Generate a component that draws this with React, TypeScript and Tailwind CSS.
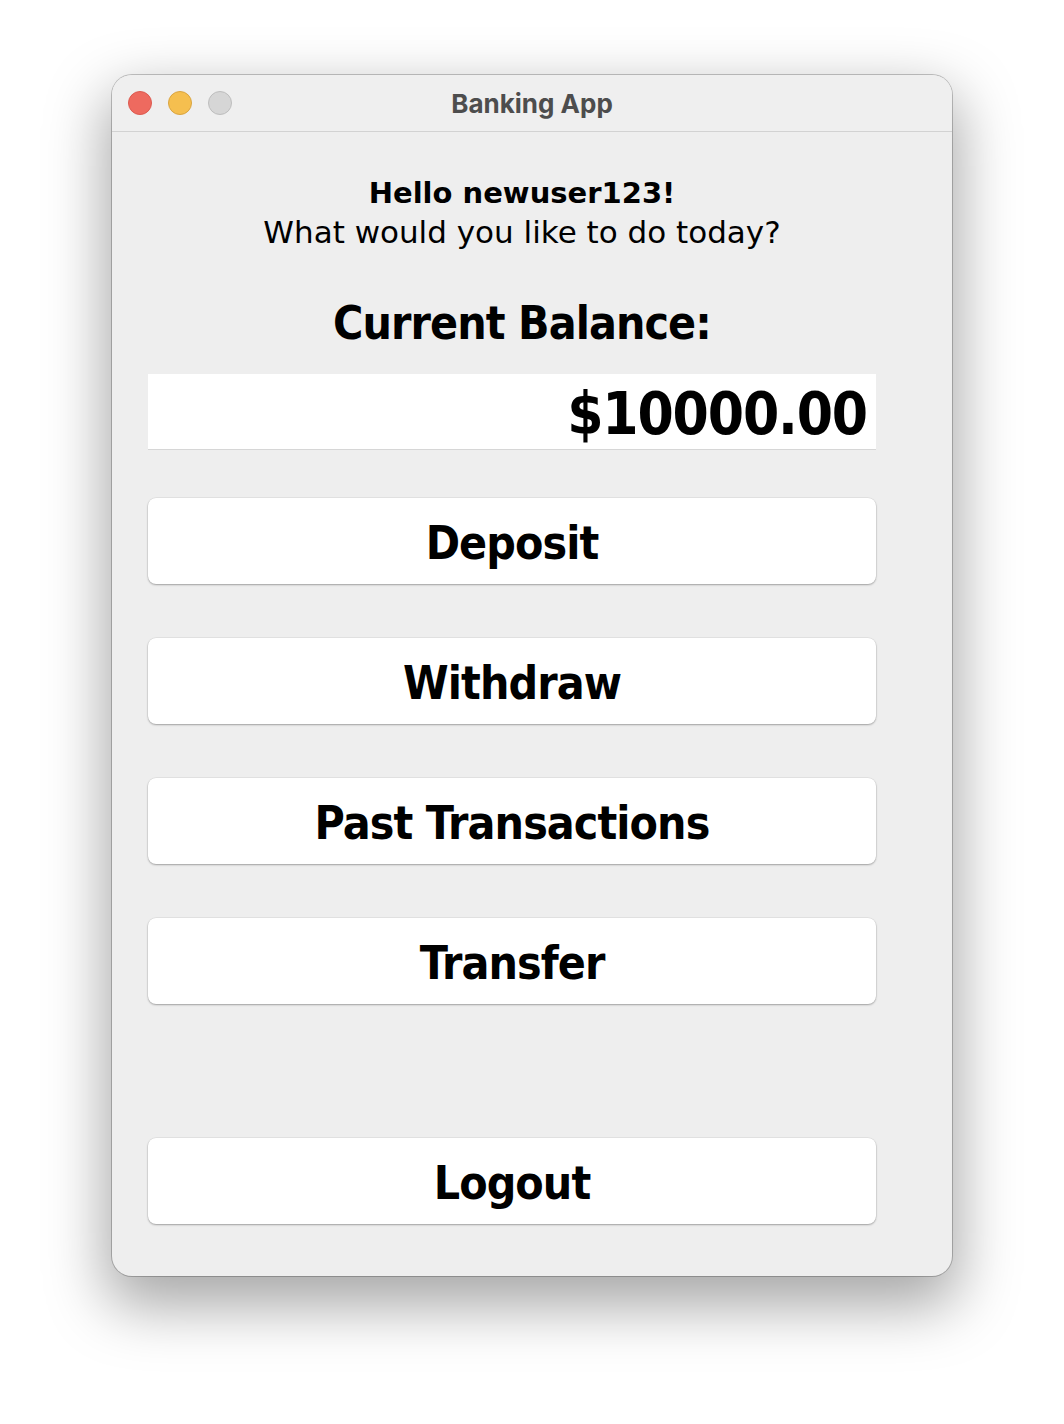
const buttons = ["Deposit", "Withdraw", "Past Transactions", "Transfer"];

const ActionButton = ({ label }: { label: string }) => {
  return (
    <button className="flex h-[86px] w-full items-center justify-center rounded-[8px] bg-white pt-[3px] font-['DejaVu_Sans_Condensed','Lato',sans-serif] text-[46px] font-bold leading-none tracking-[-0.02em] text-black shadow-[0_1px_2px_rgba(0,0,0,0.3),0_0_0_0.5px_rgba(0,0,0,0.08)]">
      {label}
    </button>
  );
};

const App = () => {
  return (
    <div className="min-h-[1424px] bg-white pl-[112px] pt-[75px] font-['DejaVu_Sans',sans-serif]">
      <div className="flex h-[1201px] w-[840px] flex-col overflow-hidden rounded-[20px] bg-[#eeeeee] shadow-[0_0_0_1px_rgba(0,0,0,0.22),0_24px_60px_6px_rgba(0,0,0,0.35)]">
        {/* title bar */}
        <div className="relative flex h-[57px] shrink-0 items-center border-b border-[#d2d2d2] bg-[#efefef] pl-[16px]">
          <div className="flex gap-[16px]">
            <span className="h-[24px] w-[24px] rounded-full border border-[#dc5a50] bg-[#ee6a5f]" />
            <span className="h-[24px] w-[24px] rounded-full border border-[#d9a441] bg-[#f5bf4f]" />
            <span className="h-[24px] w-[24px] rounded-full border border-[#bdbdbd] bg-[#d6d6d6]" />
          </div>
          <div className="absolute inset-x-0 top-0 flex h-[56px] items-center justify-center font-['Inter',sans-serif] text-[26px] font-bold text-[#4d4d4d]">
            Banking App
          </div>
        </div>

        {/* content */}
        <div className="flex flex-1 flex-col pl-[36px] pr-[76px] pt-[42px] pb-[52px]">
          <div className="-mr-[20px] text-center leading-[39px] text-black">
            <p className="text-[29px] font-bold">Hello newuser123!</p>
            <p className="text-[31px]">What would you like to do today?</p>
          </div>
          <h2 className="-mr-[20px] mt-[43px] text-center font-['DejaVu_Sans_Condensed','Lato',sans-serif] text-[46px] font-bold leading-[56px] tracking-[-0.02em] text-black">
            Current Balance:
          </h2>
          <div className="mt-[23px] flex h-[76px] items-center justify-end border-b border-[#d6d6d6] bg-white pr-[9px] pt-[5px] font-['DejaVu_Sans_Condensed','Lato',sans-serif] text-[58px] font-bold leading-none tracking-[-0.02em] text-black">
            $10000.00
          </div>
          <div className="mt-[48px] flex flex-col gap-[54px]">
            {buttons.map((b) => (
              <ActionButton key={b} label={b} />
            ))}
          </div>
          <div className="mt-auto">
            <ActionButton label="Logout" />
          </div>
        </div>
      </div>
    </div>
  );
};

export default App;
